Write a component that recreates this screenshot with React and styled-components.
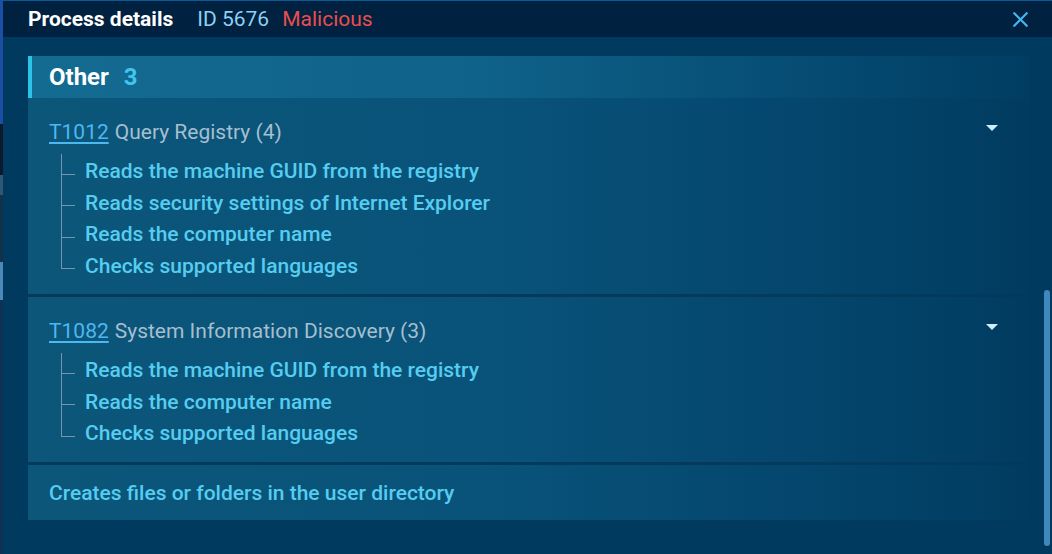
import React from "react";
import styled, { createGlobalStyle } from "styled-components";
import { X } from "lucide-react";

const Global = createGlobalStyle`
  html, body { margin: 0; padding: 0; }
  body {
    width: 1052px; height: 554px; overflow: hidden;
    background: #003a5e;
    font-family: Roboto, "Noto Sans", sans-serif;
  }
  #root { height: 554px; }
`;

const Page = styled.div`
  display: flex;
  height: 554px;
`;

const BackStrip = styled.div`
  width: 3px;
  flex: none;
  background: linear-gradient(
    #1b4fa6 0, #1b4fa6 124px, #0b1a2c 124px, #0b1a2c 175px,
    #2e5873 175px, #2e5873 195px, #12324c 195px, #12324c 262px,
    #4b89b8 262px, #4b89b8 300px, #0c3355 300px
  );
`;

const Modal = styled.div`
  flex: 1;
  display: flex;
  flex-direction: column;
  background: #003a5e;
  position: relative;
  border-top: 1px solid #0a5c98;
`;

const Header = styled.div`
  height: 36px;
  background: #00213f;
  display: flex;
  align-items: center;
  padding: 0 19px 0 25px;
  flex: none;
`;

const Title = styled.span`
  color: #ffffff;
  font-weight: 700;
  font-size: 21px;
  margin-right: 24px;
`;

const Meta = styled.span`
  color: ${(p) => p.$color};
  font-size: 21px;
  margin-right: 13px;
`;

const Close = styled.button`
  margin-left: auto;
  background: none;
  border: 0;
  padding: 0;
  color: #45b6ef;
  display: flex;
  cursor: pointer;
`;

const Body = styled.div`
  flex: 1;
  padding: 19px 22px 0 25px;
  display: flex;
  flex-direction: column;
`;

const SectionHead = styled.div`
  height: 42px;
  display: flex;
  align-items: center;
  gap: 15px;
  padding-left: 17px;
  border-left: 4px solid #2cc3e8;
  background: linear-gradient(90deg, #146b91 0%, #0f628a 45%, #054a71 80%, #013d62 100%);
`;

const SectionTitle = styled.span`
  color: #ffffff;
  font-weight: 700;
  font-size: 24px;
`;

const SectionCount = styled.span`
  color: #3ec6ee;
  font-weight: 700;
  font-size: 24px;
`;

const Cards = styled.div`
  display: flex;
  flex-direction: column;
  gap: 3px;
  background: linear-gradient(90deg, #053a5c 0%, #053a5c 80%, #003a5e 100%);
`;

const Card = styled.div`
  position: relative;
  padding: ${(p) => (p.$simple ? "16px 21px 15px" : "22px 21px 12px")};
  background: linear-gradient(90deg, #0b5679 0%, #09537a 45%, #04456c 80%, #013c60 100%);
`;

const TechRow = styled.div`
  height: 24px;
  display: flex;
  align-items: center;
  font-size: 21px;
  color: #a5bfcf;
  margin-bottom: 12px;
`;

const TechId = styled.a`
  color: #4cb8f2;
  text-decoration: underline;
  text-decoration-thickness: 2px;
  text-underline-offset: 3px;
  margin-right: 6px;
`;

const Caret = styled.span`
  position: absolute;
  right: 32px;
  top: 27px;
  width: 0;
  height: 0;
  border-left: 6px solid transparent;
  border-right: 6px solid transparent;
  border-top: 6px solid #cdeeff;
`;

const List = styled.ul`
  list-style: none;
  margin: 0;
  padding: 0 0 0 36px;
`;

const Item = styled.li`
  position: relative;
  height: 31.5px;
  line-height: 31.5px;
  font-size: 21px;
  font-weight: 500;
  color: #56cdf0;

  &::before {
    content: "";
    position: absolute;
    left: -24px;
    top: ${(p) => (p.$first ? "-2px" : "0")};
    width: 1px;
    height: ${(p) => (p.$last ? "calc(50% + 2px)" : "calc(100% + 2px)")};
    background: #7595aa;
  }
  &::after {
    content: "";
    position: absolute;
    left: -24px;
    top: calc(50% + 2px);
    width: 14px;
    height: 1px;
    background: #7595aa;
  }
`;

const Plain = styled.div`
  height: 24px;
  line-height: 24px;
  font-size: 21px;
  font-weight: 500;
  color: #56cdf0;
`;

const Thumb = styled.div`
  position: absolute;
  right: 2px;
  top: 289px;
  width: 6px;
  height: 256px;
  border-radius: 3px;
  background: #3f88bd;
`;

const techniques = [
  {
    id: "T1012",
    name: "Query Registry (4)",
    items: [
      "Reads the machine GUID from the registry",
      "Reads security settings of Internet Explorer",
      "Reads the computer name",
      "Checks supported languages",
    ],
  },
  {
    id: "T1082",
    name: "System Information Discovery (3)",
    items: [
      "Reads the machine GUID from the registry",
      "Reads the computer name",
      "Checks supported languages",
    ],
  },
];

export default function App() {
  return (
    <>
      <Global />
      <Page>
        <BackStrip />
        <Modal>
          <Header>
            <Title>Process details</Title>
            <Meta $color="#8fd0f2">ID 5676</Meta>
            <Meta $color="#ea4d50">Malicious</Meta>
            <Close aria-label="Close">
              <X size={25} strokeWidth={2.2} />
            </Close>
          </Header>
          <Body>
            <SectionHead>
              <SectionTitle>Other</SectionTitle>
              <SectionCount>3</SectionCount>
            </SectionHead>
            <Cards>
              {techniques.map((t) => (
                <Card key={t.id}>
                  <TechRow>
                    <TechId href="#">{t.id}</TechId>
                    {t.name}
                  </TechRow>
                  <Caret />
                  <List>
                    {t.items.map((it, i) => (
                      <Item key={i} $first={i === 0} $last={i === t.items.length - 1}>
                        {it}
                      </Item>
                    ))}
                  </List>
                </Card>
              ))}
              <Card $simple>
                <Plain>Creates files or folders in the user directory</Plain>
              </Card>
            </Cards>
          </Body>
          <Thumb />
        </Modal>
      </Page>
    </>
  );
}
